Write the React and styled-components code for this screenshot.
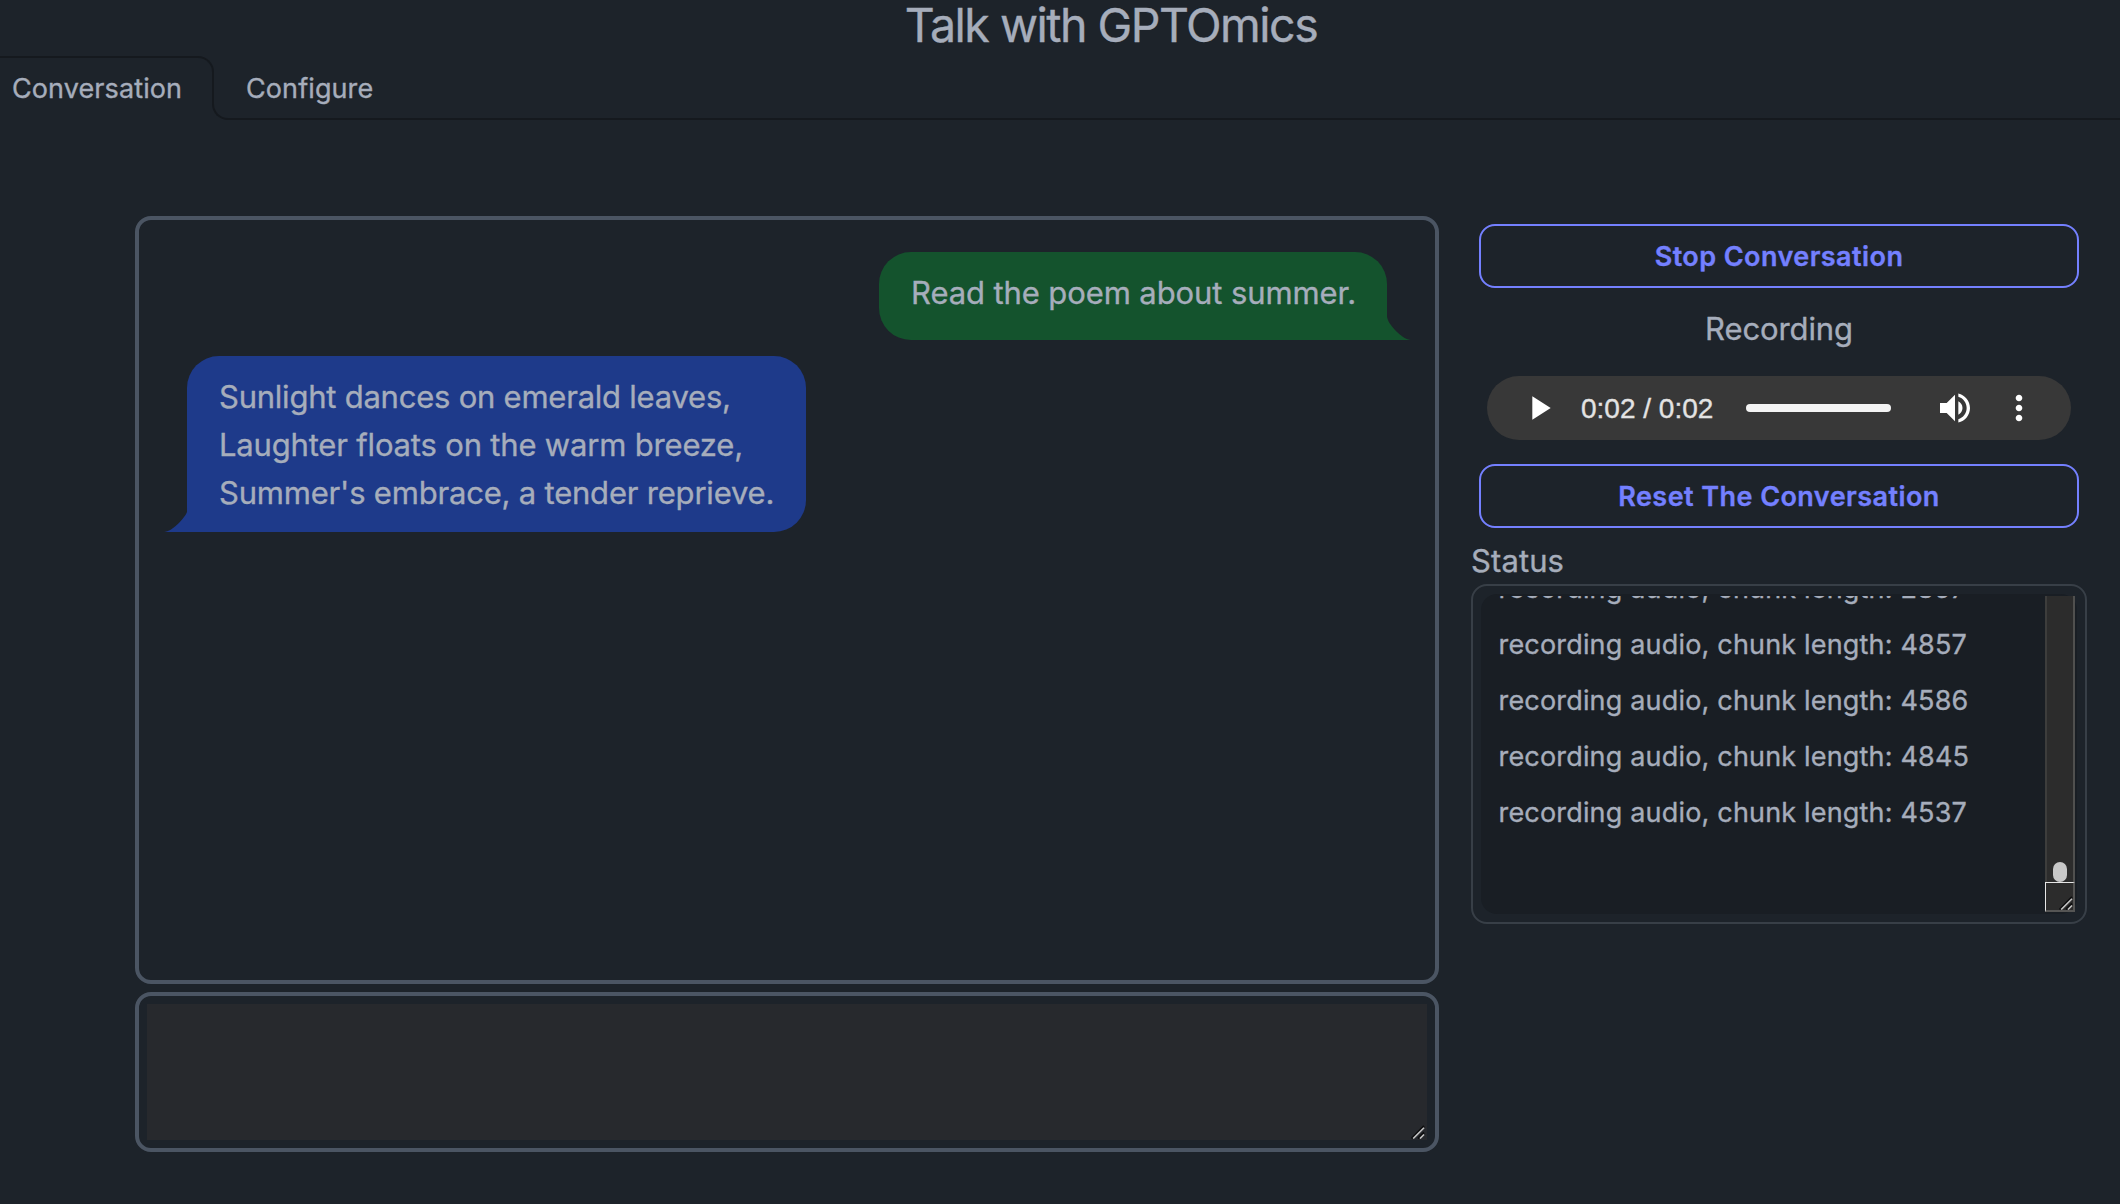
import React from "react";
import styled, { createGlobalStyle } from "styled-components";

const GlobalStyle = createGlobalStyle`
  *, *::before, *::after { box-sizing: border-box; }
  body {
    margin: 0;
    background: #1d232a;
    color: #a6adbb;
    font-family: Inter, "Liberation Sans", sans-serif;
    -webkit-text-stroke: 0.35px currentColor;
    overflow: hidden;
  }
`;

const Page = styled.div`
  height: 1204px;
  overflow: hidden;
`;

const Title = styled.h1`
  margin: 0;
  height: 56px;
  padding-left: 102px;
  text-align: center;
  font-size: 46.5px;
  font-weight: 400;
  line-height: 50px;
  letter-spacing: -1.5px;
`;

const Tabs = styled.nav`
  display: flex;
  height: 64px;
`;

const Tab = styled.a`
  position: relative;
  flex: none;
  width: ${(p) => (p.$active ? 214 : 190)}px;
  padding-left: ${(p) => (p.$active ? 12 : 32)}px;
  font-size: 27px;
  line-height: 66px;
  letter-spacing: 0.1px;
  border-bottom: 2px solid ${(p) => (p.$active ? "transparent" : "#15191e")};
  ${(p) =>
    p.$active
      ? `
  &::before {
    content: "";
    position: absolute;
    inset: 0 0 14px 0;
    border: solid #15191e;
    border-width: 2px 2px 0 0;
    border-top-right-radius: 16px;
  }
  &::after {
    content: "";
    position: absolute;
    left: 212px;
    bottom: -2px;
    width: 16px;
    height: 16px;
    border: solid #15191e;
    border-width: 0 0 2px 2px;
    border-bottom-left-radius: 16px;
  }`
      : `
  border-image: linear-gradient(to right, transparent 14px, #15191e 14px) 2;
  border-width: 0 0 2px 0;`}
`;

const TabRule = styled.div`
  flex: 1;
  border-bottom: 2px solid #15191e;
`;

const Main = styled.main`
  display: grid;
  grid-template-columns: 1304px 616px;
  column-gap: 32px;
  align-items: start;
  padding: 96px 0 0 135px;
`;

const ChatColumn = styled.section`
  display: flex;
  flex-direction: column;
  gap: 8px;
`;

const Panel = styled.div`
  height: ${(p) => p.$height}px;
  padding: ${(p) => p.$pad}px;
  border: 4px solid #4b5563;
  border-radius: 16px;
`;

const Messages = styled.div`
  padding: 24px 24px 0;
`;

const ChatRow = styled.div`
  display: flex;
  justify-content: ${(p) => (p.$end ? "flex-end" : "flex-start")};
  padding: 8px 24px;
`;

const Bubble = styled.div`
  position: relative;
  width: ${(p) => p.$width}px;
  min-height: 88px;
  padding: 17px 32px 15px;
  border-radius: ${(p) => (p.$end ? "32px 32px 0 32px" : "32px 32px 32px 0")};
  background: ${(p) => (p.$end ? "#14532d" : "#1e3a8a")};
`;

const Line = styled.div`
  font-size: 31px;
  line-height: 48px;
  letter-spacing: ${(p) => p.$track}px;
  white-space: nowrap;
`;

const Tail = styled.svg`
  position: absolute;
  bottom: 0;
  ${(p) => (p.$end ? "left: calc(100% - 0.5px);" : "right: calc(100% - 0.5px); transform: scaleX(-1);")}
  width: 24px;
  height: 24px;
  fill: ${(p) => (p.$end ? "#14532d" : "#1e3a8a")};
`;

const Prompt = styled.div`
  display: flex;
  justify-content: flex-end;
  align-items: flex-end;
  height: 100%;
  padding: 0 2px 1px 0;
  background: #27292d;
`;

const GripIcon = styled.svg`
  display: block;
  width: 14px;
  height: 14px;
  fill: none;
`;

const Side = styled.aside`
  display: flex;
  flex-direction: column;
  padding-top: 8px;
`;

const OutlineButton = styled.button`
  height: 64px;
  margin: 0 8px;
  padding: 2px 0 0;
  border: 2px solid #7480ff;
  border-radius: 16px;
  background: transparent;
  color: #7480ff;
  font: 600 27px/58px Inter, "Liberation Sans", sans-serif;
  letter-spacing: 0.44px;
`;

const RecordingLabel = styled.div`
  padding: 17px 0 23px;
  text-align: center;
  font-size: 31px;
  line-height: 48px;
  letter-spacing: -0.1px;
`;

const Player = styled.div`
  display: flex;
  align-items: center;
  height: 64px;
  margin: 0 16px 24px;
  padding: 0 32px;
  border-radius: 32px;
  background: #383838;
`;

const PlayerIcon = styled.svg`
  flex: none;
  width: 40px;
  height: 40px;
  fill: #fff;
`;

const Time = styled.span`
  flex: none;
  width: 166px;
  padding: 2px 0 0 22px;
  margin-right: 21px;
  color: #e3e3e3;
  font: 28px/40px "Liberation Sans", Arial, sans-serif;
  white-space: nowrap;
`;

const Track = styled.div`
  flex: 1;
  height: 8px;
  margin-right: 44px;
  border-radius: 4px;
  background: #f4f4f4;
`;

const Spacer = styled.div`
  width: 24px;
`;

const StatusLabel = styled.div`
  height: 56px;
  padding-top: 9px;
  font-size: 31px;
  line-height: 48px;
  letter-spacing: 0.1px;
`;

const StatusBox = styled.div`
  height: 340px;
  padding: 8px;
  border: 2px solid #383f47;
  border-radius: 16px;
`;

const StatusArea = styled.div`
  display: flex;
  height: 320px;
  padding: 2px;
  border-radius: 16px;
  background: #191e24;
`;

const Log = styled.div`
  flex: 1;
  display: flex;
  flex-direction: column;
  justify-content: flex-end;
  overflow: hidden;
  padding: 0 0 71px 15.5px;
`;

const LogLine = styled.div`
  flex: none;
  font-size: 27px;
  line-height: 56px;
  letter-spacing: 0.18px;
  white-space: nowrap;
`;

const Scrollbar = styled.div`
  display: flex;
  flex-direction: column;
  width: 30px;
`;

const ScrollTrack = styled.div`
  flex: 1;
  display: flex;
  align-items: flex-end;
  justify-content: center;
  border-style: solid;
  border-width: 0 2px;
  border-color: #3d3d3c #50504f #50504f #3d3d3c;
  background: #2c2c2c;
`;

const Thumb = styled.div`
  width: 14px;
  height: 20px;
  border-radius: 7px;
  background: #c8c8c8;
`;

const Corner = styled.div`
  display: flex;
  justify-content: flex-end;
  align-items: flex-end;
  height: 30px;
  border-style: solid;
  border-width: 1px 2px 2px 1px;
  border-color: #e6e6e6 #555554 #555554 #e6e6e6;
  background: #2c2c2c;
`;

const Grip = () => (
  <GripIcon viewBox="0 0 14 14">
    <path d="M0.5 13.5L13 1M7 13.5L13 7.5" stroke="#0c0c0d" strokeWidth="1.8" />
    <path d="M2.2 13.5L13 2.7M9 13.5L13 9.5" stroke="#c4c4c4" strokeWidth="1.6" />
  </GripIcon>
);

const messages = [
  { end: true, width: 508, lines: [["Read the poem about summer.", -0.1]] },
  {
    end: false,
    width: 619,
    lines: [
      ["Sunlight dances on emerald leaves,", -0.23],
      ["Laughter floats on the warm breeze,", -0.18],
      ["Summer's embrace, a tender reprieve.", -0.2],
    ],
  },
];

const chunks = [2857, 4857, 4586, 4845, 4537];

export default function App() {
  return (
    <Page>
      <GlobalStyle />
      <Title>Talk with GPTOmics</Title>
      <Tabs>
        <Tab $active>Conversation</Tab>
        <Tab>Configure</Tab>
        <TabRule />
      </Tabs>
      <Main>
        <ChatColumn>
          <Panel $height={768} $pad={0}>
            <Messages>
              {messages.map((m) => (
                <ChatRow key={m.width} $end={m.end}>
                  <Bubble $end={m.end} $width={m.width}>
                    {m.lines.map(([text, track]) => (
                      <Line key={text} $track={track}>{text}</Line>
                    ))}
                    <Tail $end={m.end} viewBox="0 0 3 3">
                      <path d="M0 3L3 3C2 3 0 1 0 0Z" />
                    </Tail>
                  </Bubble>
                </ChatRow>
              ))}
            </Messages>
          </Panel>
          <Panel $height={160} $pad={8}>
            <Prompt>
              <Grip />
            </Prompt>
          </Panel>
        </ChatColumn>
        <Side>
          <OutlineButton>Stop Conversation</OutlineButton>
          <RecordingLabel>Recording</RecordingLabel>
          <Player>
            <PlayerIcon viewBox="0 0 24 24">
              <path d="M8 5v14l11-7z" />
            </PlayerIcon>
            <Time>0:02 / 0:02</Time>
            <Track />
            <PlayerIcon viewBox="0 0 24 24">
              <path d="M3 9v6h4l5 5V4L7 9H3zm13.5 3c0-1.77-1.02-3.29-2.5-4.03v8.05c1.48-.73 2.5-2.25 2.5-4.02zM14 3.23v2.06c2.89.86 5 3.54 5 6.71s-2.11 5.85-5 6.71v2.06c4.01-.91 7-4.49 7-8.77s-2.99-7.86-7-8.77z" />
            </PlayerIcon>
            <Spacer />
            <PlayerIcon viewBox="0 0 24 24">
              <path d="M12 8c1.1 0 2-.9 2-2s-.9-2-2-2-2 .9-2 2 .9 2 2 2zm0 2c-1.1 0-2 .9-2 2s.9 2 2 2 2-.9 2-2-.9-2-2-2zm0 6c-1.1 0-2 .9-2 2s.9 2 2 2 2-.9 2-2-.9-2-2-2z" />
            </PlayerIcon>
          </Player>
          <OutlineButton>Reset The Conversation</OutlineButton>
          <StatusLabel>Status</StatusLabel>
          <StatusBox>
            <StatusArea>
              <Log>
                {chunks.map((n) => (
                  <LogLine key={n}>{`recording audio, chunk length: ${n}`}</LogLine>
                ))}
              </Log>
              <Scrollbar>
                <ScrollTrack>
                  <Thumb />
                </ScrollTrack>
                <Corner>
                  <Grip />
                </Corner>
              </Scrollbar>
            </StatusArea>
          </StatusBox>
        </Side>
      </Main>
    </Page>
  );
}
